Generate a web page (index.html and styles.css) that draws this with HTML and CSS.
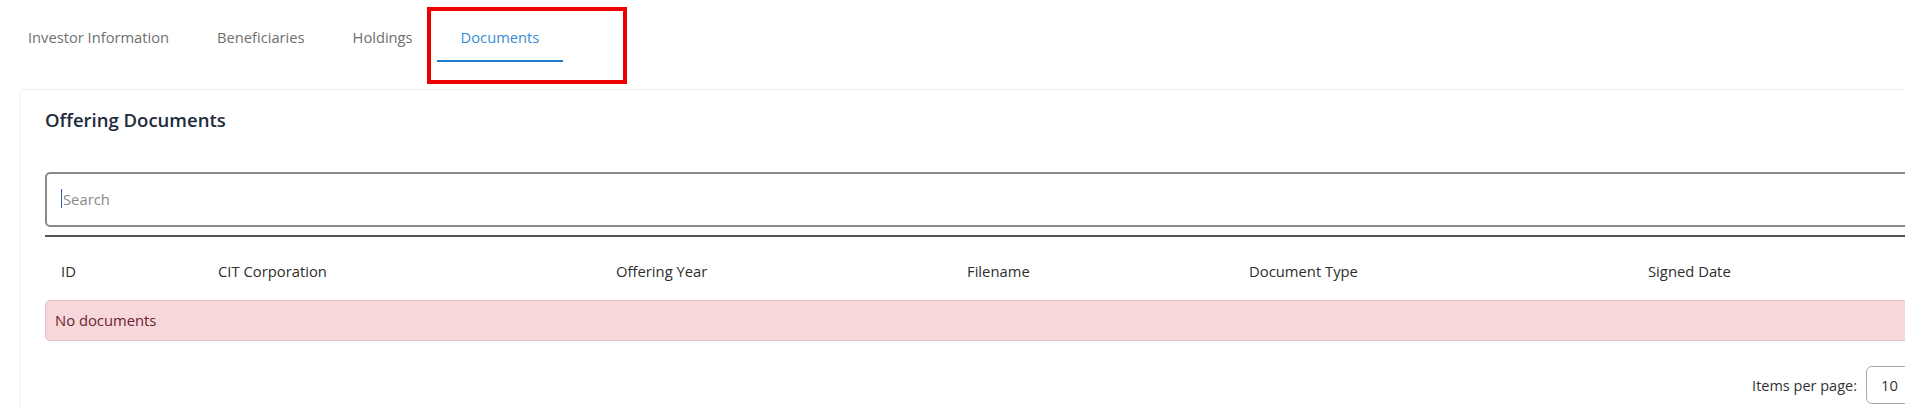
FILE: index.html
```html
<!DOCTYPE html>
<html lang="en">
<head>
<meta charset="utf-8">
<title>Documents</title>
<link rel="stylesheet" href="styles.css">
</head>
<body>
<div class="page">
  <nav class="tabs">
    <a class="tab">Investor Information</a>
    <a class="tab">Beneficiaries</a>
    <a class="tab">Holdings</a>
    <a class="tab active">Documents</a>
    <span class="highlight"></span>
  </nav>

  <section class="card">
    <h2 class="card-title">Offering Documents</h2>
    <div class="search">
      <input class="search-input" type="text" placeholder="Search">
      <span class="caret"></span>
    </div>
    <div class="table">
      <div class="thead">
        <div class="th">ID</div>
        <div class="th">CIT Corporation</div>
        <div class="th">Offering Year</div>
        <div class="th">Filename</div>
        <div class="th">Document Type</div>
        <div class="th">Signed Date</div>
      </div>
      <div class="alert">No documents</div>
    </div>
    <div class="pager">
      <span class="pager-label">Items per page:</span>
      <div class="pager-select">10</div>
    </div>
  </section>
</div>
</body>
</html>
```

FILE: styles.css
```css
html, body {
  margin: 0;
  padding: 0;
  background: #ffffff;
  overflow: hidden;
}

body {
  font-family: "Open Sans", "Liberation Sans", sans-serif;
  font-size: 14.8px;
  color: #333333;
}

.page {
  width: 2000px;
}

.tabs {
  position: relative;
  display: flex;
  margin-top: 14px;
  padding-left: 4px;
}

.tab {
  padding: 0 24px;
  height: 46px;
  line-height: 46px;
  border-bottom: 2px solid transparent;
  color: #6f6f6f;
  font-size: 14.7px;
  white-space: nowrap;
  cursor: pointer;
}

.tab.active {
  color: #3a8bd6;
  border-bottom-color: #1f7ccf;
}

.highlight {
  position: absolute;
  left: 427px;
  top: -7px;
  width: 200px;
  height: 77px;
  box-sizing: border-box;
  border: 4px solid #ee0000;
}

.card {
  margin: 27px 0 0 20px;
  width: 1961px;
  box-sizing: border-box;
  padding: 16px 24px 40px;
  border: 1px solid #f1f1f1;
  border-radius: 4px;
  box-shadow: 0 0 3px rgba(0, 0, 0, 0.05);
}

.card-title {
  margin: 0;
  font-size: 18.5px;
  line-height: 27px;
  font-weight: 600;
  color: #212b3b;
}

.search {
  position: relative;
  margin-top: 39px;
}

.search-input {
  display: block;
  width: 100%;
  height: 55px;
  box-sizing: border-box;
  border: 2px solid #8a8a8a;
  border-radius: 5px;
  padding: 0 16px 2px;
  font-family: inherit;
  font-size: 14.8px;
  color: #333;
  outline: none;
  background: #fff;
}

.search-input::placeholder {
  color: #8a8a8a;
}

.caret {
  position: absolute;
  left: 16px;
  top: 17px;
  width: 1px;
  height: 19px;
  background: #1f5fbf;
}

.table {
  margin-top: 8px;
  border-top: 2px solid #555555;
}

.thead {
  display: grid;
  grid-template-columns: 157px 398px 351px 282px 399px 1fr;
  padding: 24px 0 18px;
}

.th {
  padding-left: 16px;
  line-height: 21px;
  color: #2e2e2e;
  white-space: nowrap;
}

.alert {
  padding: 9px 9px;
  line-height: 21px;
  background: #f8d7da;
  border: 1px solid #e4c3c7;
  border-radius: 5px;
  color: #6a2530;
}

.pager {
  display: flex;
  justify-content: flex-end;
  align-items: center;
  gap: 9px;
  margin-top: 25px;
}

.pager-label {
  color: #333;
  line-height: 21px;
  font-size: 14.5px;
}

.pager-select {
  width: 90px;
  height: 38px;
  box-sizing: border-box;
  border: 1px solid #a8a8a8;
  border-radius: 6px;
  padding-left: 14px;
  line-height: 36px;
  color: #333;
}
```
